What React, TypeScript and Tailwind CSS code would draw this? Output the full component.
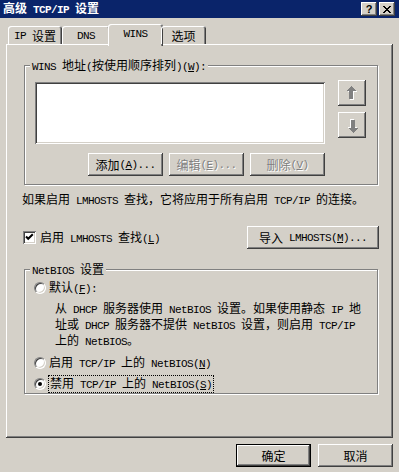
import React from 'react';

const cjk = "font-['Noto_Sans_CJK_SC',sans-serif]";
const mono = "font-['Liberation_Mono','Noto_Sans_CJK_SC',monospace] text-[11px] tracking-[-0.6px]";
const raised =
  'shadow-[inset_-1px_-1px_#404040,inset_1px_1px_#fff,inset_-2px_-2px_#808080,inset_2px_2px_#d4d0c8]';
const sunken =
  'shadow-[inset_1px_1px_#808080,inset_-1px_-1px_#fff,inset_2px_2px_#404040,inset_-2px_-2px_#d4d0c8]';
const etched = 'border border-[#808080] shadow-[inset_1px_1px_#fff,1px_1px_#fff]';
const disabled = 'text-[#808080] [text-shadow:1px_1px_0_#fff]';

function keys(p: string) {
  const i = p.indexOf('&');
  if (i < 0) return p;
  return (
    <>
      {p.slice(0, i)}
      <span className="underline">{p[i + 1]}</span>
      {p.slice(i + 2)}
    </>
  );
}

// ASCII runs get the narrow mono face, like SimSun's half-width letters
function Txt({ s }: { s: string }) {
  const parts = s.split(/([\x20-\x7e]+)/).filter(Boolean);
  return (
    <>
      {parts.map((p, i) =>
        /^[\x20-\x7e]+$/.test(p) ? (
          <span key={i} className={mono}>
            {keys(p)}
          </span>
        ) : (
          <span key={i}>{p}</span>
        )
      )}
    </>
  );
}

function Btn({ s, off, w = 'w-[75px]' }: { s: string; off?: boolean; w?: string }) {
  return (
    <div className={`${w} h-[23px] ${raised} flex items-center justify-center whitespace-pre ${off ? disabled : ''}`}>
      <Txt s={s} />
    </div>
  );
}

function Arrow({ down }: { down?: boolean }) {
  const d = 'M5 0 L0 5 L3 5 L3 13 L7 13 L7 5 L10 5 Z';
  return (
    <svg width="12" height="15" viewBox="0 0 12 15" className={down ? 'rotate-180' : ''} shapeRendering="crispEdges">
      <path d={d} fill="#fff" transform="translate(1 1)" />
      <path d={d} fill="#808080" />
    </svg>
  );
}

function Radio({ on }: { on?: boolean }) {
  return (
    <div className="w-[12px] h-[12px] shrink-0 rounded-full bg-white border border-t-[#808080] border-l-[#808080] border-r-white border-b-white shadow-[inset_1px_1px_#404040,inset_-1px_-1px_#d4d0c8] flex items-center justify-center">
      {on && <div className="w-[4px] h-[4px] rounded-full bg-black" />}
    </div>
  );
}

function Group({ label, h, children }: { label: string; h: string; children: React.ReactNode }) {
  return (
    <div className={`relative ml-[2px] mr-[1px] ${h} ${etched}`}>
      <div className="absolute -top-[8px] left-[5px] px-[2px] bg-[#d4d0c8] whitespace-pre">
        <Txt s={label} />
      </div>
      {children}
    </div>
  );
}

export default function App() {
  return (
    <div className={`w-[399px] h-[472px] bg-[#d4d0c8] text-[12px] leading-[14px] text-black ${cjk} overflow-hidden flex flex-col`}>
      {/* Title bar */}
      <div className="h-[18px] bg-[#0a246a] flex items-center pl-[3px] pr-[4px]">
        <span className="flex-1 text-white font-bold whitespace-pre">
          <Txt s="高级 TCP/IP 设置" />
        </span>
        <div className="flex gap-[2px]">
          <div className={`w-[16px] h-[14px] bg-[#d4d0c8] ${raised} flex items-center justify-center font-['Liberation_Sans',sans-serif] font-bold text-[11px] leading-none`}>
            ?
          </div>
          <div className={`w-[16px] h-[14px] bg-[#d4d0c8] ${raised} flex items-center justify-center`}>
            <svg width="8" height="7" viewBox="0 0 8 7" shapeRendering="crispEdges">
              <path d="M0 0h2v1h-2zM6 0h2v1h-2zM1 1h2v1h-2zM5 1h2v1h-2zM2 2h4v1h-4zM3 3h2v1h-2zM2 4h4v1h-4zM1 5h2v1h-2zM5 5h2v1h-2zM0 6h2v1h-2zM6 6h2v1h-2z" fill="#000" />
            </svg>
          </div>
        </div>
      </div>

      {/* Tabs */}
      <div className="mt-[6px] h-[20px] pl-[8px] flex items-end relative z-10">
        {[
          { t: 'IP 设置', w: 'w-[54px]' },
          { t: 'DNS', w: 'w-[48px]' },
          { t: 'WINS', w: 'w-[55px]', sel: true },
          { t: '选项', w: 'w-[45px]' },
        ].map((tab) =>
          tab.sel ? (
            <div
              key={tab.t}
              className={`${tab.w} -mx-[2px] -mb-[2px] h-[22px] bg-[#d4d0c8] rounded-t-[3px] shadow-[inset_1px_1px_#fff,inset_-1px_0_#404040,inset_-2px_0_#808080] flex justify-center pt-[3px] whitespace-pre`}
            >
              <Txt s={tab.t} />
            </div>
          ) : (
            <div
              key={tab.t}
              className={`${tab.w} h-[18px] rounded-t-[3px] shadow-[inset_1px_1px_#fff,inset_-1px_0_#404040,inset_-2px_0_#808080] flex justify-center pt-[3px] whitespace-pre`}
            >
              <Txt s={tab.t} />
            </div>
          )
        )}
      </div>

      {/* Tab panel */}
      <div className={`mx-[6px] h-[394px] ${raised} pl-[16px] pr-[14px] pt-[21px] flex flex-col`}>
        <Group label="WINS 地址(按使用顺序排列)(&W):" h="h-[120px]">
          <div className="flex pl-[10px] pt-[14px]">
            <div className="flex flex-col w-[290px] mt-[2px]">
              <div className={`h-[62px] bg-white ${sunken}`} />
              <div className="flex justify-end gap-[6px] mt-[9px]">
                <Btn s="添加(&A)..." />
                <Btn s="编辑(&E)..." off />
                <Btn s="删除(&V)" off />
              </div>
            </div>
            <div className="flex flex-col gap-[6px] ml-[13px]">
              <div className={`w-[28px] h-[26px] ${raised} flex items-center justify-center`}>
                <Arrow />
              </div>
              <div className={`w-[28px] h-[26px] ${raised} flex items-center justify-center`}>
                <Arrow down />
              </div>
            </div>
          </div>
        </Group>

        <div className="mt-[7px] whitespace-pre">
          <Txt s="如果启用 LMHOSTS 查找，它将应用于所有启用 TCP/IP 的连接。" />
        </div>

        <div className="mt-[18px] h-[23px] flex items-center justify-between">
          <div className="flex items-center ml-[1px] whitespace-pre">
            <div className={`relative w-[13px] h-[13px] bg-white ${sunken}`}>
              <svg width="13" height="13" viewBox="0 0 13 13" className="absolute inset-0">
                <path d="M3 5.5 L5.2 7.8 L9.8 3.2" stroke="#000" strokeWidth="2" fill="none" />
              </svg>
            </div>
            <span className="ml-[4px]">
              <Txt s="启用 LMHOSTS 查找(&L)" />
            </span>
          </div>
          <Btn s="导入 LMHOSTS(&M)..." w="w-[132px]" />
        </div>

        <div className="mt-[20px]">
          <Group label="NetBIOS 设置" h="h-[125px]">
            <div className="flex flex-col pl-[9px] pt-[11px] whitespace-pre">
              <div className="h-[14px] flex items-center">
                <Radio />
                <span className="ml-[3px]">
                  <Txt s="默认(&F):" />
                </span>
              </div>
              <div className="pl-[21px] mt-[6px] leading-[13px]">
                <div>
                  <Txt s="从 DHCP 服务器使用 NetBIOS 设置。如果使用静态 IP 地" />
                </div>
                <div>
                  <Txt s="址或 DHCP 服务器不提供 NetBIOS 设置，则启用 TCP/IP" />
                </div>
                <div>
                  <Txt s="上的 NetBIOS。" />
                </div>
              </div>
              <div className="h-[14px] mt-[7px] flex items-center">
                <Radio />
                <span className="ml-[3px]">
                  <Txt s="启用 TCP/IP 上的 NetBIOS(&N)" />
                </span>
              </div>
              <div className="h-[14px] mt-[7px] flex items-center">
                <Radio on />
                <span className="ml-[2px] px-[1px] border border-dotted border-black leading-[13px]">
                  <Txt s="禁用 TCP/IP 上的 NetBIOS(&S)" />
                </span>
              </div>
            </div>
          </Group>
        </div>
      </div>

      {/* Dialog buttons */}
      <div className="mt-[6px] flex justify-end gap-[7px] pr-[6px]">
        <div className="w-[75px] h-[23px] border border-black">
          <div className={`w-full h-full ${raised} flex items-center justify-center`}>确定</div>
        </div>
        <Btn s="取消" />
      </div>
    </div>
  );
}
